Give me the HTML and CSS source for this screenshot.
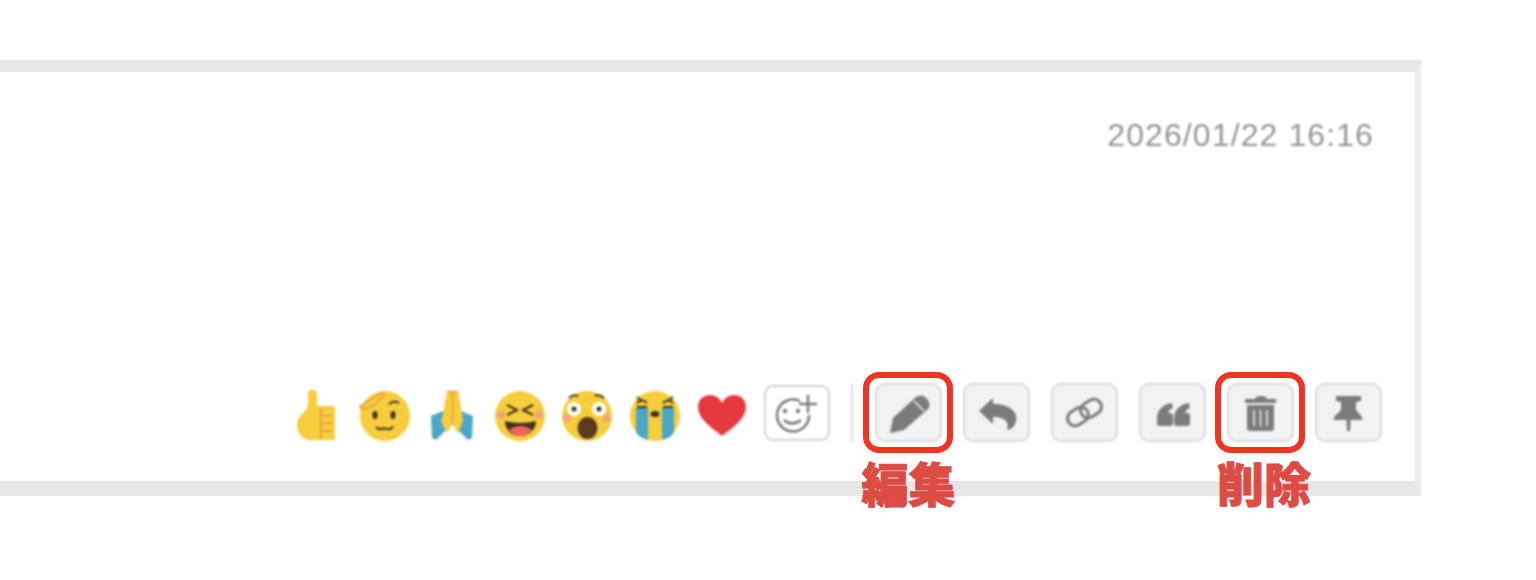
FILE: index.html
```html
<!DOCTYPE html>
<html lang="en">
<head>
    <meta charset="UTF-8">
    <meta name="viewport" content="width=device-width, initial-scale=1.0">
    <title>Message actions</title>
    <link rel="stylesheet" href="styles.css">
</head>
<body>

    <div class="card">
        <p class="date">2026/01/22 16:16</p>

        <div class="toolbar">
            <!-- Reactions -->
            <div class="reactions">
                <svg class="emoji" viewBox="0 0 52 52">
                    <path class="yellow" d="M17 4a4.500 4.500 0 0 1 9 0V16H44V50H24C12 52 6 44 6 35C6 24 16 24 17 14Z"/>
                    <path class="fold" d="M30 18V50M30 26H41M30 33H41M30 41H41"/>
                </svg>
                <svg class="emoji" viewBox="0 0 52 52">
                    <circle class="yellow" cx="26" cy="26" r="25"/>
                    <path class="yellow fold" d="M1 16L23 3L25 5C18 14 10 20 2 19Z"/>
                    <ellipse class="dark" cx="16" cy="25" rx="2.500" ry="4"/>
                    <ellipse class="dark" cx="34" cy="25" rx="2.500" ry="4"/>
                    <path class="line" d="M30 14Q35 10 40 13M17 37Q21 41 25 38Q30 41 34 37"/>
                </svg>
                <svg class="emoji" viewBox="0 0 52 52">
                    <path class="blue" d="M5 26L17 21L22 38L10 50L6 48Z"/>
                    <path class="blue" d="M47 26L35 21L30 38L42 50L46 48Z"/>
                    <path class="yellow" d="M21 1H32L36 24L37 31L32 43L26.500 34L21 43L15 31L17 24Z"/>
                    <path class="fold" d="M26.500 3V34M21 1.500H32"/>
                </svg>
                <svg class="emoji" viewBox="0 0 52 52">
                    <circle class="yellow" cx="26" cy="26" r="25"/>
                    <circle class="cheek" cx="7" cy="25" r="4"/>
                    <circle class="cheek" cx="45" cy="25" r="4"/>
                    <path class="line" d="M13 15L23 20L13 25M39 15L29 20L39 25"/>
                    <path class="dark" d="M11 31Q26 35 42 31C42 40 34 46 26 46C18 46 11 40 11 31Z"/>
                    <path class="tongue" d="M15 40Q26 32 38 40C35 44 30 46 26 46C22 46 18 44 15 40Z"/>
                </svg>
                <svg class="emoji" viewBox="0 0 52 52">
                    <circle class="yellow" cx="26" cy="26" r="25"/>
                    <circle class="cheek" cx="6" cy="28" r="4"/>
                    <circle class="cheek" cx="46" cy="28" r="4"/>
                    <circle class="white" cx="13" cy="19" r="7"/>
                    <circle class="white" cx="38" cy="19" r="7"/>
                    <circle class="dark" cx="13" cy="19" r="2.500"/>
                    <circle class="dark" cx="38" cy="19" r="2.500"/>
                    <path class="line" d="M8 8Q12 4 17 6M34 6Q39 4 43 8"/>
                    <ellipse class="brown" cx="26.500" cy="38" rx="10" ry="11"/>
                </svg>
                <svg class="emoji" viewBox="0 0 52 52">
                    <circle class="yellow" cx="26" cy="26" r="25"/>
                    <path class="blue" d="M7 18H19V50L13 48Q9 46 7 42Z"/>
                    <path class="blue" d="M33 18H45V42Q43 46 39 48L33 50Z"/>
                    <path class="line" d="M8 13Q13 8 18 13M8 7L12 10M34 13Q39 8 44 13M44 7L40 10M8 17H18M34 17H44"/>
                    <ellipse class="dark" cx="26" cy="24" rx="4.500" ry="3"/>
                </svg>
                <svg class="emoji" viewBox="0 0 52 52">
                    <path class="red" d="M26 46C14 37 2 28 2 17C2 9 8 5 14 5C20 5 24 9 26 13C28 9 32 5 38 5C44 5 50 9 50 17C50 28 38 37 26 46Z"/>
                </svg>
            </div>

            <button class="add-reaction" type="button">
                <svg viewBox="0 0 66 56">
                    <path class="outline" d="M36 16A16 16 0 1 0 45 30M44 10V28M35 19H53"/>
                    <circle class="mark" cx="21" cy="26" r="2.200"/>
                    <circle class="mark" cx="34" cy="26" r="2.200"/>
                    <path class="outline" d="M20 35Q28 42 37 35"/>
                </svg>
            </button>

            <span class="divider"></span>

            <!-- Message actions -->
            <div class="marked">
                <button class="action" type="button">
                    <svg viewBox="0 0 67 59">
                        <path class="mark" d="M15 50L18 35L41 14Q46 11 50 14L53 17Q56 22 53 26L29 47Z"/>
                        <path class="gap" d="M39 18L49 28"/>
                    </svg>
                </button>
                <span class="callout">編集</span>
            </div>
            <button class="action" type="button">
                <svg viewBox="0 0 67 59">
                    <path class="mark" d="M16 28L30 15V21C47 21 55 29 53 38C52 43 49 46 44 47C46 41 44 34 30 34V41Z"/>
                </svg>
            </button>
            <button class="action" type="button">
                <svg viewBox="0 0 67 59">
                    <rect class="outline link" x="16" y="26" width="22" height="15" rx="7.500" transform="rotate(-32 27 33.500)"/>
                    <rect class="outline link" x="29" y="18" width="22" height="15" rx="7.500" transform="rotate(-32 40 25.500)"/>
                </svg>
            </button>
            <button class="action" type="button">
                <svg viewBox="0 0 67 59">
                    <path class="mark" d="M18 36C18 27 24 21 33 20L34 25C31 26 29 28 29 30H31Q34 30 34 33V40Q34 43 31 43H21Q18 43 18 40Z"/>
                    <path class="mark" d="M35 36C35 27 41 21 50 20L51 25C48 26 46 28 46 30H48Q51 30 51 33V40Q51 43 48 43H38Q35 43 35 40Z"/>
                </svg>
            </button>
            <div class="marked marked-trash">
                <button class="action" type="button">
                    <svg viewBox="0 0 67 59">
                        <path class="mark" d="M18 16H28Q29 13 33 13H35Q39 13 40 16H49V20H18Z"/>
                        <path class="mark" d="M20 22H47V45Q47 48 44 48H23Q20 48 20 45Z"/>
                        <path class="gap" d="M27 27V43M33.500 27V43M40 27V43"/>
                    </svg>
                </button>
                <span class="callout">削除</span>
            </div>
            <button class="action" type="button">
                <svg viewBox="0 0 67 59">
                    <path class="mark" d="M21 13H46V18L41 19V27L47 34V37H35.500L35 48H32L31.500 37H19V34L26 27V19L21 18Z"/>
                </svg>
            </button>
        </div>
    </div>

</body>
</html>
```

FILE: styles.css
```css
body {
    margin: 0;
    height: 580px;
    overflow: hidden;
    background: white;
    font-family: "Liberation Sans", Arial, sans-serif;
}
.card {
    box-sizing: border-box;
    display: flex;
    flex-direction: column;
    width: 1441px;
    height: 436px;
    margin: 60px 0 0 -20px;
    padding: 0 33px 39px 0;
    border-top: 12px solid #e7e7e7;
    border-bottom: 15px solid #e7e7e7;
    border-right: 6px solid #ececec;
    box-shadow: 0 0 1px #e7e7e7, inset 0 0 1px #e7e7e7;
}
.date {
    margin: 46px 8px 0 0;
    text-align: right;
    font-size: 32px;
    line-height: 34px;
    letter-spacing: 1.1px;
    color: #969696;
    filter: blur(1px);
}
.toolbar {
    display: flex;
    align-items: center;
    justify-content: flex-end;
    margin-top: auto;
}
.reactions {
    display: flex;
    gap: 15.5px;
    margin-right: 16px;
    filter: blur(1px);
}
.emoji {
    width: 52px;
    height: 52px;
    margin-top: 7px;
}
.yellow { fill: #f6cd3c; }
.blue { fill: #4ba7c6; }
.red { fill: #e5383f; }
.white { fill: white; }
.dark { fill: #40301f; }
.brown { fill: #5b3a1d; }
.cheek { fill: #f3a47c; }
.tongue { fill: #ef6461; }
.fold {
    fill: none;
    stroke: #e89a3a;
    stroke-width: 1.5;
}
.yellow.fold { fill: #f6cd3c; }
.line {
    fill: none;
    stroke: #40301f;
    stroke-width: 2;
}
button {
    padding: 0;
    border: none;
    cursor: pointer;
    filter: blur(1px);
}
button svg {
    display: block;
    width: 100%;
    height: 100%;
}
.add-reaction {
    width: 66px;
    height: 56px;
    background: white;
    border-radius: 9px;
    box-shadow: inset 0 0 0 2px #d2d2d2;
}
.divider {
    width: 2px;
    height: 58px;
    margin: 0 22px 0 21px;
    background: #dcdcdc;
    filter: blur(1px);
}
.action {
    display: block;
    width: 67px;
    height: 59px;
    margin-left: 21px;
    background: #f2f2f2;
    border-radius: 10px;
    box-shadow: inset 0 0 0 2px #d9d9d9;
}
.mark { fill: #7b7b7b; }
.outline {
    fill: none;
    stroke: #7b7b7b;
    stroke-width: 2.500;
}
.outline.link { stroke-width: 3; }
.gap {
    fill: none;
    stroke: #f2f2f2;
    stroke-width: 1.500;
}
/* red annotation frames on top of the screenshot */
.marked {
    position: relative;
    margin-left: 21px;
}
.marked .action {
    margin-left: 0;
}
.divider + .marked {
    margin-left: 0;
}
.marked::after {
    content: "";
    position: absolute;
    top: -11px;
    left: -12px;
    right: -11px;
    bottom: -11px;
    border: 6px solid #ee3524;
    border-radius: 16px;
}
.callout {
    position: absolute;
    top: 74px;
    left: 50%;
    transform: translateX(-50%);
    white-space: nowrap;
    font-family: "Noto Sans CJK JP", sans-serif;
    font-weight: 900;
    font-size: 47px;
    line-height: 50px;
    color: #dd4b45;
    -webkit-text-stroke: 1px #dd4b45;
}
.marked-trash .callout {
    left: 37px;
}
```
